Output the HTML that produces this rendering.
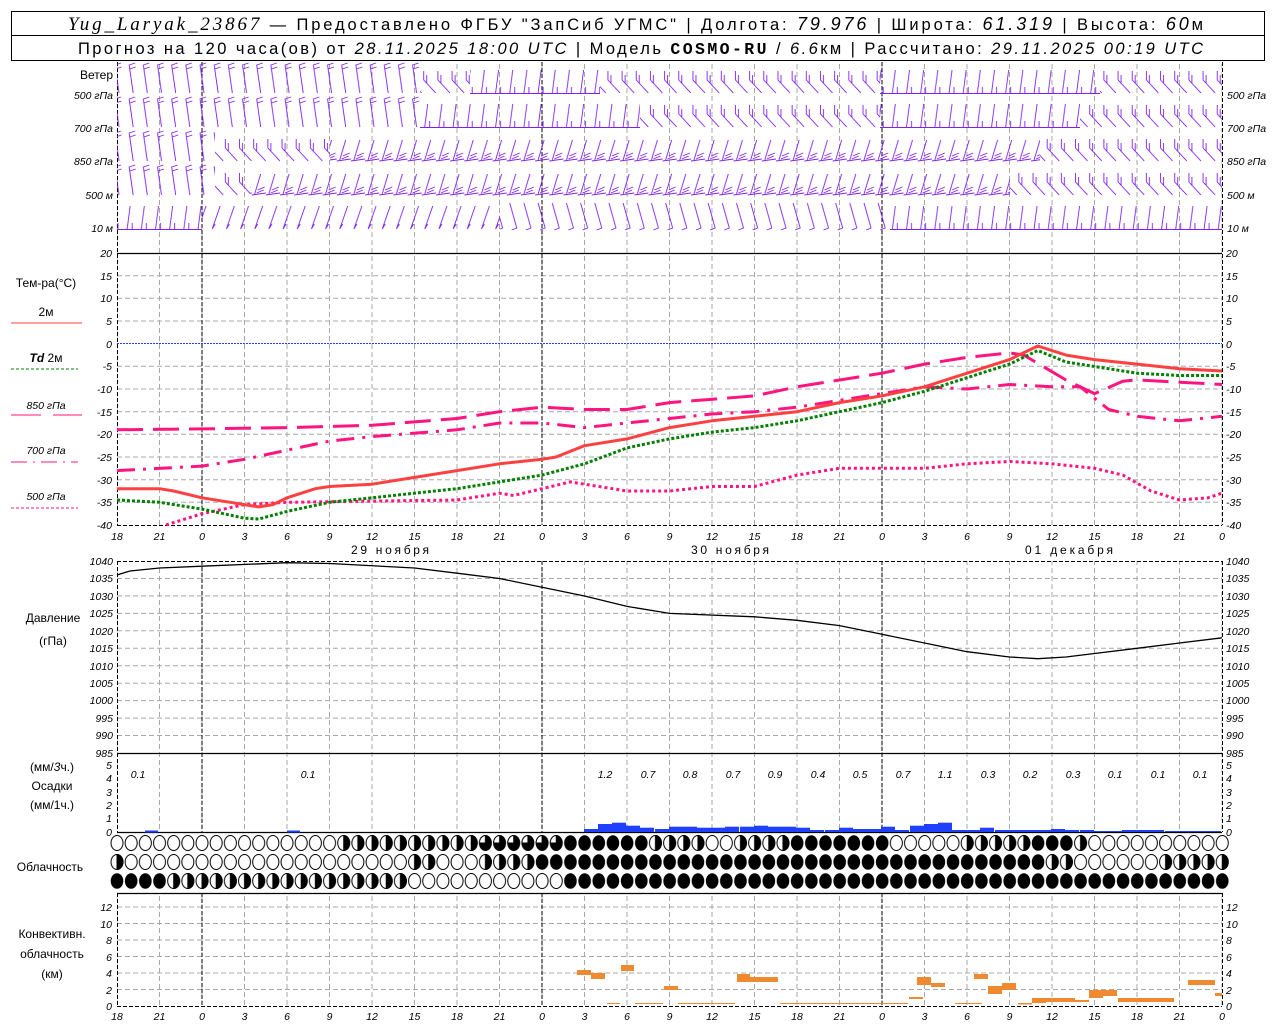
<!DOCTYPE html>
<html><head><meta charset="utf-8"><style>
html,body{margin:0;padding:0;background:#fff;}
svg{display:block;}
text{font-family:"Liberation Sans","DejaVu Sans",sans-serif;}
.t{font-size:10.5px;font-style:italic;fill:#000;}
.lab{font-size:12px;fill:#000;}
.hd{font-size:16.5px;fill:#000;}
</style></head><body>
<svg width="1280" height="1024" viewBox="0 0 1280 1024" xmlns="http://www.w3.org/2000/svg">
<defs>
<pattern id="vg" patternUnits="userSpaceOnUse" x="116.5" y="0" width="42.5" height="8"><line x1="0.5" y1="0" x2="0.5" y2="5" stroke="#a8a8a8" stroke-width="1"/></pattern>
<pattern id="gA" patternUnits="userSpaceOnUse" x="110" y="62" width="14.17" height="34"><path d="M9 31 L5 3 L11 1 M5.5 7 L11.5 5" stroke="#8020f0" fill="none" stroke-width="0.9"/></pattern>
<pattern id="gB" patternUnits="userSpaceOnUse" x="110" y="62" width="14.17" height="34"><path d="M14 31 L2 18 L2 9 M5 21 L5 13" stroke="#8020f0" fill="none" stroke-width="0.9"/></pattern>
<pattern id="gC" patternUnits="userSpaceOnUse" x="110" y="62" width="14.17" height="34"><path d="M0 31.5 L14.17 31.5 M3 31 L6 8 M8 31 L8 25" stroke="#8020f0" fill="none" stroke-width="0.9"/></pattern>
<pattern id="gF" patternUnits="userSpaceOnUse" x="110" y="62" width="14.17" height="34"><path d="M0 31 L14.17 29 M3 30 L9 10 M5 29 L12 26 M6 26 L13 23" stroke="#8020f0" fill="none" stroke-width="0.9"/></pattern>
<pattern id="gD" patternUnits="userSpaceOnUse" x="110" y="62" width="14.17" height="34"><path d="M3 31 L11 8 M3 31 L6 26" stroke="#8020f0" fill="none" stroke-width="0.9"/></pattern>
<pattern id="gE" patternUnits="userSpaceOnUse" x="110" y="62" width="14.17" height="34"><path d="M3 5 L10 30 L5 32" stroke="#8020f0" fill="none" stroke-width="0.9"/></pattern>
<pattern id="cO" patternUnits="userSpaceOnUse" x="109.915" y="0" width="14.17" height="1024"><ellipse cx="7.085" cy="843" rx="6" ry="7.5" fill="#fff" stroke="#000"/><ellipse cx="7.085" cy="862" rx="6" ry="7.5" fill="#fff" stroke="#000"/><ellipse cx="7.085" cy="881" rx="6" ry="7.5" fill="#fff" stroke="#000"/></pattern>
<pattern id="cF" patternUnits="userSpaceOnUse" x="109.915" y="0" width="14.17" height="1024"><ellipse cx="7.085" cy="843" rx="6.3" ry="7.8" fill="#000"/><ellipse cx="7.085" cy="862" rx="6.3" ry="7.8" fill="#000"/><ellipse cx="7.085" cy="881" rx="6.3" ry="7.8" fill="#000"/></pattern>
<pattern id="cH" patternUnits="userSpaceOnUse" x="109.915" y="0" width="14.17" height="1024"><g stroke="#000"><ellipse cx="7.085" cy="843" rx="6" ry="7.5" fill="#fff"/><path d="M7.085 835.5 A6 7.5 0 0 1 7.085 850.5Z" fill="#000"/><ellipse cx="7.085" cy="862" rx="6" ry="7.5" fill="#fff"/><path d="M7.085 854.5 A6 7.5 0 0 1 7.085 869.5Z" fill="#000"/><ellipse cx="7.085" cy="881" rx="6" ry="7.5" fill="#fff"/><path d="M7.085 873.5 A6 7.5 0 0 1 7.085 888.5Z" fill="#000"/></g></pattern>
<pattern id="cQ" patternUnits="userSpaceOnUse" x="109.915" y="0" width="14.17" height="1024"><g stroke="#000"><ellipse cx="7.085" cy="843" rx="6" ry="7.5" fill="#000"/><path d="M7.085 843 L1.085 843 A6 7.5 0 0 1 7.085 835.5Z" fill="#fff"/></g></pattern>
</defs>

<!-- header -->
<rect x="11.5" y="11.5" width="1253" height="49" fill="none" stroke="#000"/>
<line x1="11" y1="35.5" x2="1265" y2="35.5" stroke="#000"/>
<text x="68" y="30" class="hd" textLength="1135" lengthAdjust="spacing"><tspan font-family="Liberation Serif" font-style="italic" font-size="19">Yug_Laryak_23867</tspan> — Предоставлено ФГБУ "ЗапСиб УГМС" | Долгота: <tspan font-style="italic" font-size="18">79.976</tspan> | Широта: <tspan font-style="italic" font-size="18">61.319</tspan> | Высота: <tspan font-style="italic" font-size="18">60</tspan>м</text>
<text x="78" y="54" class="hd" textLength="1125" lengthAdjust="spacing">Прогноз на 120 часа(ов) от <tspan font-style="italic">28.11.2025 18:00 UTC</tspan>  | Модель <tspan font-family="Liberation Mono" font-weight="bold">COSMO-RU</tspan> / <tspan font-style="italic">6.6</tspan>км | Рассчитано: <tspan font-style="italic">29.11.2025 00:19 UTC</tspan></text>

<!-- grids -->
<rect x="117" y="62" width="1105" height="463" fill="url(#vg)"/>
<rect x="117" y="561" width="1105" height="271" fill="url(#vg)"/>
<rect x="117" y="893" width="1105" height="113" fill="url(#vg)"/>
<g stroke="#a8a8a8" stroke-dasharray="5,3">
<line x1="117" y1="275.7" x2="1222" y2="275.7"/><line x1="117" y1="298.3" x2="1222" y2="298.3"/><line x1="117" y1="321" x2="1222" y2="321"/><line x1="117" y1="366.3" x2="1222" y2="366.3"/><line x1="117" y1="389" x2="1222" y2="389"/><line x1="117" y1="411.7" x2="1222" y2="411.7"/><line x1="117" y1="434.3" x2="1222" y2="434.3"/><line x1="117" y1="457" x2="1222" y2="457"/><line x1="117" y1="479.7" x2="1222" y2="479.7"/><line x1="117" y1="502.3" x2="1222" y2="502.3"/>
<line x1="117" y1="578.5" x2="1222" y2="578.5"/><line x1="117" y1="595.9" x2="1222" y2="595.9"/><line x1="117" y1="613.4" x2="1222" y2="613.4"/><line x1="117" y1="630.8" x2="1222" y2="630.8"/><line x1="117" y1="648.3" x2="1222" y2="648.3"/><line x1="117" y1="665.7" x2="1222" y2="665.7"/><line x1="117" y1="683.2" x2="1222" y2="683.2"/><line x1="117" y1="700.6" x2="1222" y2="700.6"/><line x1="117" y1="718.1" x2="1222" y2="718.1"/><line x1="117" y1="735.5" x2="1222" y2="735.5"/>
<line x1="117" y1="907" x2="1222" y2="907"/><line x1="117" y1="923.5" x2="1222" y2="923.5"/><line x1="117" y1="940" x2="1222" y2="940"/><line x1="117" y1="956.5" x2="1222" y2="956.5"/><line x1="117" y1="973" x2="1222" y2="973"/><line x1="117" y1="989.5" x2="1222" y2="989.5"/>
</g>
<line x1="117" y1="343.5" x2="1222" y2="343.5" stroke="#2040ff" stroke-dasharray="2,1"/>
<g stroke="#000" stroke-dasharray="4,2">
<line x1="117.5" y1="62" x2="117.5" y2="525"/><line x1="1222.5" y1="62" x2="1222.5" y2="525"/>
<line x1="202" y1="62" x2="202" y2="525"/><line x1="542" y1="62" x2="542" y2="525"/><line x1="882" y1="62" x2="882" y2="525"/>
<line x1="117" y1="525.5" x2="1222" y2="525.5"/>
<line x1="117.5" y1="561" x2="117.5" y2="832"/><line x1="1222.5" y1="561" x2="1222.5" y2="832"/>
<line x1="202" y1="561" x2="202" y2="832"/><line x1="542" y1="561" x2="542" y2="832"/><line x1="882" y1="561" x2="882" y2="832"/>
<line x1="117" y1="561.5" x2="1222" y2="561.5"/>
<line x1="117.5" y1="893" x2="117.5" y2="1006"/><line x1="1222.5" y1="893" x2="1222.5" y2="1006"/>
<line x1="202" y1="893" x2="202" y2="1006"/><line x1="542" y1="893" x2="542" y2="1006"/><line x1="882" y1="893" x2="882" y2="1006"/>
<line x1="117" y1="1006.5" x2="1222" y2="1006.5"/>
</g>
<g stroke="#000" stroke-width="1.3">
<line x1="117" y1="253.5" x2="1222" y2="253.5"/>
<line x1="117" y1="753.5" x2="1222" y2="753.5"/>
<line x1="117" y1="832.5" x2="1222" y2="832.5"/>
<line x1="117" y1="893.5" x2="1222" y2="893.5"/>
</g>

<!-- wind barbs -->
<g>
<rect x="117" y="62" width="303" height="34" fill="url(#gA)"/>
<rect x="420" y="62" width="50" height="34" fill="url(#gB)"/>
<rect x="470" y="62" width="130" height="34" fill="url(#gC)"/>
<rect x="600" y="62" width="280" height="34" fill="url(#gB)"/>
<rect x="880" y="62" width="220" height="34" fill="url(#gC)"/>
<rect x="1100" y="62" width="122" height="34" fill="url(#gB)"/>

<rect x="117" y="96" width="303" height="34" fill="url(#gA)"/>
<rect x="420" y="96" width="220" height="34" fill="url(#gC)"/>
<rect x="640" y="96" width="240" height="34" fill="url(#gB)"/>
<rect x="880" y="96" width="200" height="34" fill="url(#gC)"/>
<rect x="1080" y="96" width="142" height="34" fill="url(#gB)"/>

<rect x="117" y="130" width="98" height="34" fill="url(#gA)"/>
<rect x="215" y="130" width="115" height="34" fill="url(#gB)"/>
<rect x="330" y="130" width="710" height="34" fill="url(#gF)"/>
<rect x="1040" y="130" width="182" height="34" fill="url(#gB)"/>

<rect x="117" y="164" width="98" height="34" fill="url(#gA)"/>
<rect x="215" y="164" width="35" height="34" fill="url(#gB)"/>
<rect x="250" y="164" width="760" height="34" fill="url(#gF)"/>
<rect x="1010" y="164" width="212" height="34" fill="url(#gB)"/>

<rect x="117" y="198" width="85" height="34" fill="url(#gC)"/>
<rect x="202" y="198" width="298" height="34" fill="url(#gD)"/>
<rect x="500" y="198" width="390" height="34" fill="url(#gE)"/>
<rect x="890" y="198" width="332" height="34" fill="url(#gC)"/>
</g>

<!-- wind labels -->
<g>
<text x="113" y="79" text-anchor="end" class="lab" font-size="11.5">Ветер</text>
<text x="113" y="99" text-anchor="end" class="t">500 гПа</text>
<text x="113" y="132" text-anchor="end" class="t">700 гПа</text>
<text x="113" y="165" text-anchor="end" class="t">850 гПа</text>
<text x="113" y="199" text-anchor="end" class="t">500  м</text>
<text x="113" y="232" text-anchor="end" class="t">10   м</text>
<text x="1227" y="99" class="t">500 гПа</text>
<text x="1227" y="132" class="t">700 гПа</text>
<text x="1227" y="165" class="t">850 гПа</text>
<text x="1227" y="199" class="t">500  м</text>
<text x="1227" y="232" class="t">10   м</text>
</g>

<!-- temp axis labels -->
<g class="t">
<text x="112" y="257" text-anchor="end">20</text><text x="112" y="280" text-anchor="end">15</text><text x="112" y="302" text-anchor="end">10</text><text x="112" y="325" text-anchor="end">5</text><text x="112" y="348" text-anchor="end">0</text><text x="112" y="370" text-anchor="end">-5</text><text x="112" y="393" text-anchor="end">-10</text><text x="112" y="416" text-anchor="end">-15</text><text x="112" y="438" text-anchor="end">-20</text><text x="112" y="461" text-anchor="end">-25</text><text x="112" y="484" text-anchor="end">-30</text><text x="112" y="506" text-anchor="end">-35</text><text x="112" y="529" text-anchor="end">-40</text>
<text x="1226" y="257">20</text><text x="1226" y="280">15</text><text x="1226" y="302">10</text><text x="1226" y="325">5</text><text x="1226" y="348">0</text><text x="1226" y="370">-5</text><text x="1226" y="393">-10</text><text x="1226" y="416">-15</text><text x="1226" y="438">-20</text><text x="1226" y="461">-25</text><text x="1226" y="484">-30</text><text x="1226" y="506">-35</text><text x="1226" y="529">-40</text>
</g>
<!-- temp legend -->
<text x="46" y="287" text-anchor="middle" class="lab">Тем-ра(°C)</text>
<text x="46" y="316" text-anchor="middle" class="lab" font-size="10.5">2м</text>
<line x1="11" y1="323" x2="82" y2="323" stroke="#ff4040"/>
<text x="46" y="362" text-anchor="middle" class="lab" font-size="10.5"><tspan font-style="italic" font-weight="bold">Td</tspan>  2м</text>
<line x1="11" y1="369" x2="78" y2="369" stroke="#008000" stroke-dasharray="3,2"/>
<text x="46" y="409" text-anchor="middle" class="t">850 гПа</text>
<line x1="11" y1="415" x2="82" y2="415" stroke="#ff1480" stroke-dasharray="30,12"/>
<text x="46" y="454" text-anchor="middle" class="t">700 гПа</text>
<line x1="11" y1="462" x2="78" y2="462" stroke="#ff1480" stroke-dasharray="16,6,2,6"/>
<text x="46" y="500" text-anchor="middle" class="t">500 гПа</text>
<line x1="11" y1="508" x2="78" y2="508" stroke="#ff1480" stroke-dasharray="3,2"/>

<!-- temp curves -->
<g fill="none" stroke-linejoin="round">
<polyline stroke="#ff1480" stroke-width="3" stroke-dasharray="26,10" points="117,429.8 202,428.9 287,427.6 372,425.3 457,418.5 499.5,411.7 542,407.2 584.5,409.5 627,409.5 669.5,402.6 754.5,395.9 797,386.8 839.5,380 882,373.2 924.5,364.1 967,357.4 1009.5,352.9 1023.7,355.1 1066,380 1094.5,393.6 1122.8,381.2 1137,379.9 1179.5,382.2 1222,384.5"/>
<polyline stroke="#ff1480" stroke-width="3" stroke-dasharray="18,8,3,8" points="117,470.6 202,466.1 244.5,459.3 329.5,441.1 372,436.6 457,429.8 499.5,423 542,423 584.5,427.6 627,423 669.5,418.5 712,414 754.5,411.7 797,407.2 839.5,400.4 882,393.6 924.5,386.8 967,389 1009.5,384.5 1052,386.8 1080.3,386.8 1108.7,409.5 1137,416.3 1179.5,420.8 1222,416.3"/>
<polyline stroke="#ff1480" stroke-width="3" stroke-dasharray="3,3" points="166,525 202,513.7 244.5,504.6 287,502.3 457,500 485.3,495.5 499.5,493.2 513.7,495.5 542,488.7 570.3,481.9 584.5,484.2 627,491 669.5,491 712,486.5 754.5,486.5 797,475.1 839.5,468.3 882,468.3 924.5,468.3 967,463.8 1009.5,461.5 1052,463.8 1094.5,468.3 1122.8,475.1 1151,491 1179.5,500 1208,497.8 1222,493.2"/>
<polyline stroke="#008000" stroke-width="3" stroke-dasharray="3,2" points="117,500 159.5,502.3 202,509.1 244.5,518.2 258.7,519 287,511.4 329.5,502.3 372,497.8 414.5,493.2 457,488.7 499.5,481.9 542,475.1 584.5,463.8 627,447.9 669.5,438.9 712,432.1 754.5,427.6 797,420.8 839.5,411.7 882,402.6 924.5,391.3 967,377.7 1009.5,364.1 1037.8,350.5 1066,362 1094.5,366.5 1137,373.2 1179.5,375.5 1222,375.5"/>
<polyline stroke="#ff4040" stroke-width="3" points="117,488.7 159.5,488.7 173.7,491 202,497.8 230.3,502.3 244.5,504.6 258.7,506.9 272.8,504.6 287,497.8 315.3,488.7 329.5,486.5 372,484.2 414.5,477.4 457,470.6 499.5,463.8 542,459.3 556,457 584.5,445.7 627,438.9 669.5,427.6 712,420.8 754.5,416.3 797,411.7 839.5,402.6 882,395.9 924.5,386.8 967,373.2 1009.5,359.6 1037.8,346 1066,355.1 1094.5,359.6 1137,364.1 1179.5,368.7 1222,371"/>
</g>

<!-- time labels -->
<g class="t" font-size="12" text-anchor="middle">
<text x="117" y="540">18</text><text x="159.5" y="540">21</text><text x="202" y="540">0</text><text x="244.5" y="540">3</text><text x="287" y="540">6</text><text x="329.5" y="540">9</text><text x="372" y="540">12</text><text x="414.5" y="540">15</text><text x="457" y="540">18</text><text x="499.5" y="540">21</text><text x="542" y="540">0</text><text x="584.5" y="540">3</text><text x="627" y="540">6</text><text x="669.5" y="540">9</text><text x="712" y="540">12</text><text x="754.5" y="540">15</text><text x="797" y="540">18</text><text x="839.5" y="540">21</text><text x="882" y="540">0</text><text x="924.5" y="540">3</text><text x="967" y="540">6</text><text x="1009.5" y="540">9</text><text x="1052" y="540">12</text><text x="1094.5" y="540">15</text><text x="1137" y="540">18</text><text x="1179.5" y="540">21</text><text x="1222" y="540">0</text>
</g>
<g class="lab" text-anchor="middle">
<text x="390" y="554" textLength="78" lengthAdjust="spacing">29 ноября</text><text x="730" y="554" textLength="78" lengthAdjust="spacing">30 ноября</text><text x="1069" y="554" textLength="88" lengthAdjust="spacing">01 декабря</text>
</g>

<!-- pressure -->
<text x="53" y="622" text-anchor="middle" class="lab">Давление</text>
<text x="53" y="645" text-anchor="middle" class="lab">(гПа)</text>
<g class="t" font-size="9.5">
<text x="113" y="565" text-anchor="end">1040</text><text x="113" y="582" text-anchor="end">1035</text><text x="113" y="600" text-anchor="end">1030</text><text x="113" y="617" text-anchor="end">1025</text><text x="113" y="635" text-anchor="end">1020</text><text x="113" y="652" text-anchor="end">1015</text><text x="113" y="670" text-anchor="end">1010</text><text x="113" y="687" text-anchor="end">1005</text><text x="113" y="704" text-anchor="end">1000</text><text x="113" y="722" text-anchor="end">995</text><text x="113" y="739" text-anchor="end">990</text><text x="113" y="757" text-anchor="end">985</text>
<text x="1226" y="565">1040</text><text x="1226" y="582">1035</text><text x="1226" y="600">1030</text><text x="1226" y="617">1025</text><text x="1226" y="635">1020</text><text x="1226" y="652">1015</text><text x="1226" y="670">1010</text><text x="1226" y="687">1005</text><text x="1226" y="704">1000</text><text x="1226" y="722">995</text><text x="1226" y="739">990</text><text x="1226" y="757">985</text>
</g>
<polyline fill="none" stroke="#000" stroke-width="1.3" points="117,575 130,571 159.5,568 202,566.2 287,562.7 329.5,563.5 414.5,568 457,573.2 499.5,578.5 542,587.2 584.5,596 627,606.4 669.5,613.4 754.5,616.8 797,620.3 839.5,625.6 882,634.3 924.5,643 967,651.7 1009.5,657 1037.8,658.7 1066,657 1094.5,653.5 1137,648.3 1179.5,643 1222,637.8"/>

<!-- precip -->
<text x="52" y="771" text-anchor="middle" class="lab">(мм/<tspan font-style="italic">3</tspan>ч.)</text>
<text x="52" y="790" text-anchor="middle" class="lab">Осадки</text>
<text x="52" y="809" text-anchor="middle" class="lab">(мм/1ч.)</text>
<g class="t" font-size="9.5">
<text x="112" y="769" text-anchor="end">5</text><text x="112" y="782" text-anchor="end">4</text><text x="112" y="796" text-anchor="end">3</text><text x="112" y="809" text-anchor="end">2</text><text x="112" y="822" text-anchor="end">1</text><text x="112" y="836" text-anchor="end">0</text>
<text x="1226" y="769">5</text><text x="1226" y="782">4</text><text x="1226" y="796">3</text><text x="1226" y="809">2</text><text x="1226" y="822">1</text><text x="1226" y="836">0</text>
</g>
<g class="t" font-size="12" text-anchor="middle">
<text x="138" y="778">0.1</text><text x="308" y="778">0.1</text><text x="605" y="778">1.2</text><text x="648" y="778">0.7</text><text x="690" y="778">0.8</text><text x="733" y="778">0.7</text><text x="775" y="778">0.9</text><text x="818" y="778">0.4</text><text x="860" y="778">0.5</text><text x="903" y="778">0.7</text><text x="945" y="778">1.1</text><text x="988" y="778">0.3</text><text x="1030" y="778">0.2</text><text x="1073" y="778">0.3</text><text x="1115" y="778">0.1</text><text x="1158" y="778">0.1</text><text x="1200" y="778">0.1</text>
</g>
<g fill="#2040ff">
<rect x="145" y="830.5" width="13" height="2"/><rect x="287" y="830.5" width="13" height="2"/>
<rect x="584" y="829" width="14" height="3"/><rect x="598" y="824" width="14" height="8"/><rect x="612" y="822.7" width="14" height="9.3"/><rect x="626" y="825.7" width="14" height="6.3"/><rect x="640" y="827.7" width="14" height="4.3"/><rect x="655" y="829" width="14" height="3"/><rect x="669" y="826.7" width="14" height="5.3"/><rect x="683" y="826.7" width="14" height="5.3"/><rect x="697" y="827.7" width="14" height="4.3"/><rect x="711" y="827.7" width="14" height="4.3"/><rect x="725" y="826.7" width="14" height="5.3"/><rect x="740" y="826.7" width="14" height="5.3"/><rect x="754" y="825.7" width="14" height="6.3"/><rect x="768" y="826.7" width="14" height="5.3"/><rect x="782" y="826.7" width="14" height="5.3"/><rect x="796" y="827.7" width="14" height="4.3"/><rect x="810" y="830" width="14" height="2"/><rect x="825" y="830" width="14" height="2"/><rect x="839" y="827.7" width="14" height="4.3"/><rect x="853" y="829" width="14" height="3"/><rect x="867" y="829" width="14" height="3"/><rect x="881" y="826.7" width="14" height="5.3"/><rect x="895" y="830" width="14" height="2"/><rect x="910" y="825.7" width="14" height="6.3"/><rect x="924" y="824" width="14" height="8"/><rect x="938" y="822.7" width="14" height="9.3"/><rect x="952" y="830" width="14" height="2"/><rect x="966" y="830" width="14" height="2"/><rect x="980" y="827.7" width="14" height="4.3"/><rect x="995" y="830" width="14" height="2"/><rect x="1009" y="830" width="14" height="2"/><rect x="1023" y="830" width="14" height="2"/><rect x="1037" y="830" width="14" height="2"/><rect x="1051" y="829" width="14" height="3"/><rect x="1065" y="830" width="14" height="2"/><rect x="1080" y="830" width="14" height="2"/><rect x="1094" y="831" width="14" height="1"/><rect x="1108" y="831" width="14" height="1"/><rect x="1122" y="830" width="14" height="2"/><rect x="1136" y="830" width="14" height="2"/><rect x="1150" y="830" width="14" height="2"/><rect x="1165" y="831" width="14" height="1"/><rect x="1179" y="831" width="14" height="1"/><rect x="1193" y="831" width="14" height="1"/><rect x="1207" y="831" width="14" height="1"/>
</g>

<!-- clouds -->
<text x="50" y="871" text-anchor="middle" class="lab">Облачность</text>
<g>
<rect x="110" y="834" width="226.7" height="18" fill="url(#cO)"/>
<rect x="336.6" y="834" width="141.7" height="18" fill="url(#cH)"/>
<rect x="478.4" y="834" width="85" height="18" fill="url(#cQ)"/>
<rect x="563.4" y="834" width="85" height="18" fill="url(#cF)"/>
<rect x="648.4" y="834" width="56.7" height="18" fill="url(#cH)"/>
<rect x="705.1" y="834" width="28.3" height="18" fill="url(#cO)"/>
<rect x="733.4" y="834" width="56.7" height="18" fill="url(#cH)"/>
<rect x="790.1" y="834" width="99.2" height="18" fill="url(#cF)"/>
<rect x="889.3" y="834" width="70.8" height="18" fill="url(#cO)"/>
<rect x="960.1" y="834" width="70.9" height="18" fill="url(#cH)"/>
<rect x="1031" y="834" width="42.5" height="18" fill="url(#cF)"/>
<rect x="1073.5" y="834" width="14.2" height="18" fill="url(#cH)"/>
<rect x="1087.7" y="834" width="141.7" height="18" fill="url(#cO)"/>
<rect x="110" y="853" width="14.2" height="18" fill="url(#cH)"/>
<rect x="124.1" y="853" width="283.4" height="18" fill="url(#cO)"/>
<rect x="407.5" y="853" width="28.3" height="18" fill="url(#cH)"/>
<rect x="435.8" y="853" width="42.5" height="18" fill="url(#cO)"/>
<rect x="478.4" y="853" width="56.7" height="18" fill="url(#cH)"/>
<rect x="535" y="853" width="510" height="18" fill="url(#cF)"/>
<rect x="1045.1" y="853" width="28.4" height="18" fill="url(#cH)"/>
<rect x="1073.5" y="853" width="85" height="18" fill="url(#cO)"/>
<rect x="1158.5" y="853" width="70.9" height="18" fill="url(#cH)"/>
<rect x="110" y="872" width="56.7" height="18" fill="url(#cF)"/>
<rect x="166.6" y="872" width="240.9" height="18" fill="url(#cH)"/>
<rect x="407.5" y="872" width="155.9" height="18" fill="url(#cO)"/>
<rect x="563.4" y="872" width="666" height="18" fill="url(#cF)"/>
</g>

<!-- convective -->
<text x="52" y="938" text-anchor="middle" class="lab">Конвективн.</text>
<text x="52" y="958" text-anchor="middle" class="lab">облачность</text>
<text x="52" y="978" text-anchor="middle" class="lab">(км)</text>
<g class="t" font-size="9.5">
<text x="112" y="911" text-anchor="end">12</text><text x="112" y="928" text-anchor="end">10</text><text x="112" y="944" text-anchor="end">8</text><text x="112" y="961" text-anchor="end">6</text><text x="112" y="977" text-anchor="end">4</text><text x="112" y="994" text-anchor="end">2</text><text x="112" y="1010" text-anchor="end">0</text>
<text x="1226" y="911">12</text><text x="1226" y="928">10</text><text x="1226" y="944">8</text><text x="1226" y="961">6</text><text x="1226" y="977">4</text><text x="1226" y="994">2</text><text x="1226" y="1010">0</text>
</g>
<g fill="#f08a30">
<rect x="577" y="970" width="14" height="5"/><rect x="591" y="973" width="14" height="6"/><rect x="621" y="965" width="13" height="6"/><rect x="664" y="986" width="14" height="4"/><rect x="737" y="974" width="13" height="8"/><rect x="750" y="977" width="28" height="5"/><rect x="909" y="997" width="14" height="2"/><rect x="917" y="977" width="14" height="8"/><rect x="931" y="983" width="14" height="4"/><rect x="974" y="974" width="14" height="5"/><rect x="988" y="986" width="14" height="8"/><rect x="1002" y="983" width="14" height="7"/><rect x="1018" y="1003" width="14" height="1.5"/><rect x="1032" y="998" width="14" height="5"/><rect x="1046" y="998" width="29" height="4"/><rect x="1075" y="1000" width="14" height="2"/><rect x="1089" y="990" width="14" height="8"/><rect x="1103" y="990" width="14" height="6"/><rect x="1118" y="998" width="56" height="4"/><rect x="1188" y="980" width="27" height="5"/><rect x="1215" y="993" width="7" height="3"/>
<rect x="607" y="1003" width="13" height="1"/><rect x="635" y="1003" width="28" height="1"/><rect x="678" y="1003" width="57" height="1"/><rect x="780" y="1003" width="128" height="1"/><rect x="955" y="1003" width="27" height="1"/>
</g>
<g class="t" font-size="12" text-anchor="middle">
<text x="117" y="1020">18</text><text x="159.5" y="1020">21</text><text x="202" y="1020">0</text><text x="244.5" y="1020">3</text><text x="287" y="1020">6</text><text x="329.5" y="1020">9</text><text x="372" y="1020">12</text><text x="414.5" y="1020">15</text><text x="457" y="1020">18</text><text x="499.5" y="1020">21</text><text x="542" y="1020">0</text><text x="584.5" y="1020">3</text><text x="627" y="1020">6</text><text x="669.5" y="1020">9</text><text x="712" y="1020">12</text><text x="754.5" y="1020">15</text><text x="797" y="1020">18</text><text x="839.5" y="1020">21</text><text x="882" y="1020">0</text><text x="924.5" y="1020">3</text><text x="967" y="1020">6</text><text x="1009.5" y="1020">9</text><text x="1052" y="1020">12</text><text x="1094.5" y="1020">15</text><text x="1137" y="1020">18</text><text x="1179.5" y="1020">21</text><text x="1222" y="1020">0</text>
</g>
</svg>
</body></html>
